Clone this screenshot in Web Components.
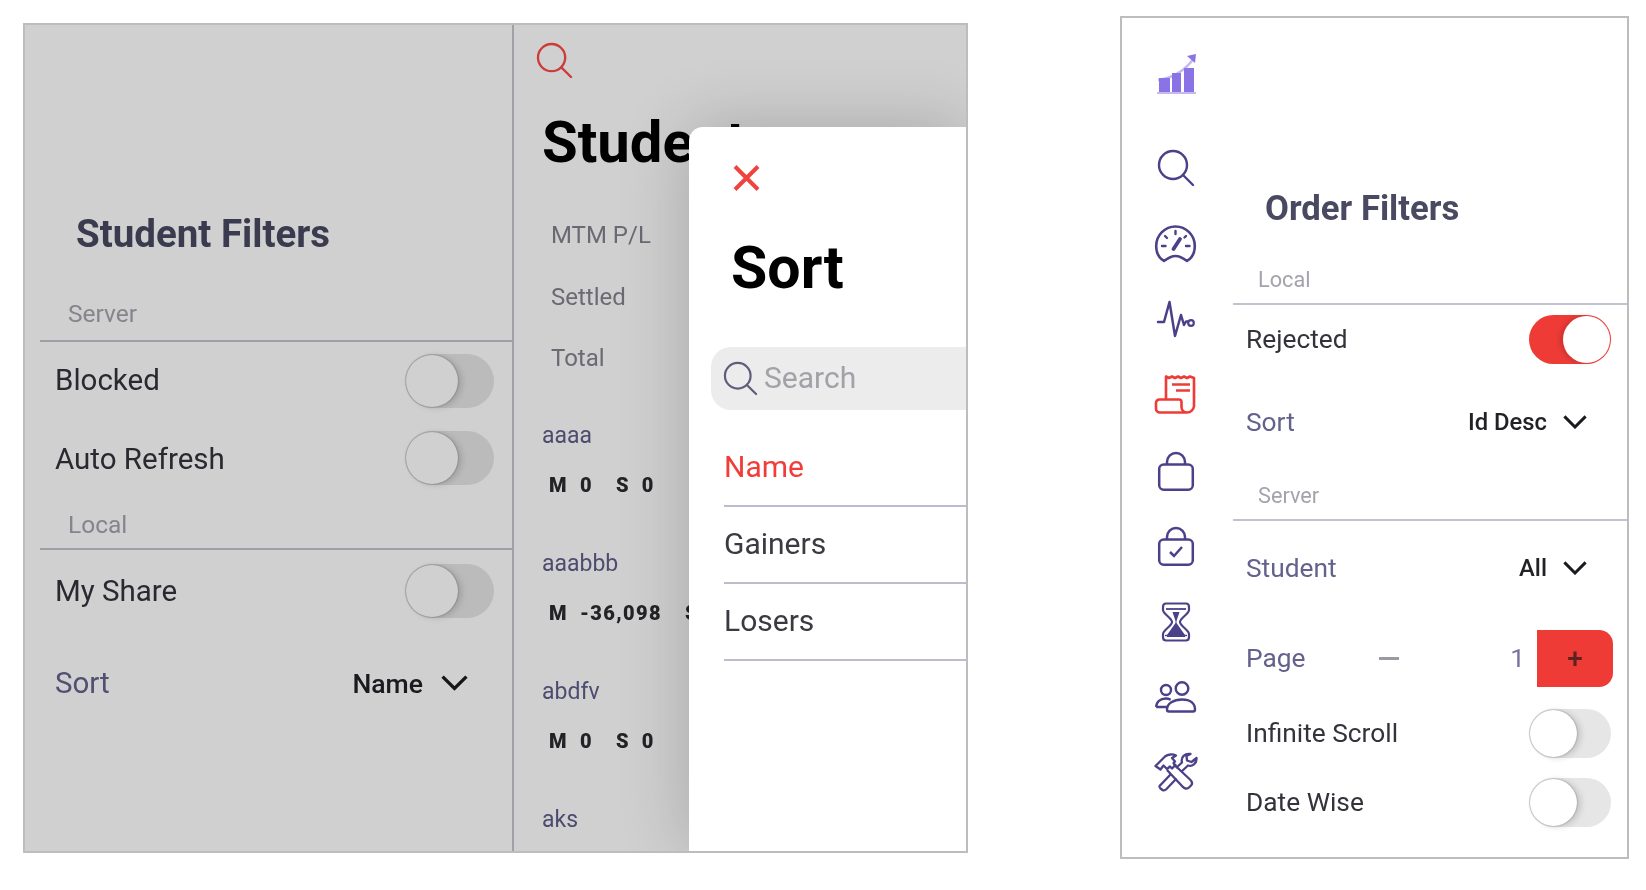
<!DOCTYPE html>
<html>
<head>
<meta charset="utf-8">
<title>Filters</title>
<style>
    html, body { margin: 0; padding: 0; background: #fff; }
    body { font-family: Roboto, "Liberation Sans", sans-serif; width: 1646px; height: 890px; overflow: hidden; }
    .stage { display: flex; align-items: flex-start; padding: 16px 0 0 23px; }
</style>
</head>
<body>
<div class="stage">
    <student-screen></student-screen>
    <order-screen></order-screen>
</div>

<script>
const INDIGO = '#4b4189';
const RED = '#ee3b36';

const ICONS = {
    chart: { w: 40, h: 41, svg: `
        <path d="M2 27C16 25 29 18 38 5" fill="none" stroke="#c5b8f3" stroke-width="2.4"/>
        <path d="M31 3l9-2-1 9z" fill="#8b73e6"/>
        <rect x="3" y="25" width="11" height="14" fill="#8b73e6"/>
        <rect x="16" y="20" width="9" height="19" fill="#8b73e6"/>
        <rect x="28" y="15" width="10" height="24" fill="#8b73e6"/>
        <path d="M1 40H40" stroke="#c5b8f3" stroke-width="2"/>` },
    search: { w: 36, h: 36, svg: `
        <circle cx="15" cy="15" r="14" fill="none" stroke="currentColor" stroke-width="2.4"/>
        <path d="M25 25L35 35" stroke="currentColor" stroke-width="2.4" stroke-linecap="round"/>` },
    gauge: { w: 41, h: 38, svg: `
        <path d="M9 36C4 33 1.200 27 1.200 21 1.200 10 10 1.500 20.500 1.500S39.800 10 39.800 21C39.800 27 37 33 32 36 28 33 25 31 20.500 31S13 33 9 36Z" fill="none" stroke="currentColor" stroke-width="2.600" stroke-linejoin="round"/>
        <path d="M7 21h3.500M10 11l2 2M20.500 6v3M31 11l-1.500 1.500M31 21h3.500" stroke="currentColor" stroke-width="2.400" stroke-linecap="round"/>
        <path d="M18.500 24L25 14" stroke="currentColor" stroke-width="3.800" stroke-linecap="round"/>` },
    pulse: { w: 38, h: 38, svg: `
        <path d="M1 22H7L12.500 2 18 36 24 15 27 25 29 21.500H31" fill="none" stroke="currentColor" stroke-width="2.500" stroke-linejoin="round" stroke-linecap="round"/>
        <circle cx="34" cy="23" r="2.800" fill="none" stroke="currentColor" stroke-width="2.200"/>` },
    receipt: { w: 41, h: 39, svg: `
        <path d="M11 24V1.500l3 1.500 3-1.500 3 1.500 3-1.500 3 1.500 3-1.500 3 1.500 3-1.500 4 1.500V31a7 7 0 0 1-7 6.500H5a4 4 0 0 1-4-4V28a3.500 3.500 0 0 1 3.500-3.500H24c1.500 0 2.500 1 2.500 2.500v5c0 3 2.500 5.500 6 5.500" fill="none" stroke="currentColor" stroke-width="2.600" stroke-linejoin="round"/>
        <path d="M17 9.500H35M21 15.500H35" stroke="currentColor" stroke-width="2.400"/>` },
    bag: { w: 36, h: 39, svg: `
        <rect x="1.200" y="12.500" width="33.600" height="25.300" rx="4.500" fill="none" stroke="currentColor" stroke-width="2.500"/>
        <path d="M9 12.500V10a9 9 0 0 1 18 0v2.500" fill="none" stroke="currentColor" stroke-width="2.500"/>` },
    bagcheck: { w: 36, h: 39, svg: `
        <rect x="1.200" y="12.500" width="33.600" height="25.300" rx="4.500" fill="none" stroke="currentColor" stroke-width="2.500"/>
        <path d="M9 12.500V10a9 9 0 0 1 18 0v2.500" fill="none" stroke="currentColor" stroke-width="2.500"/>
        <path d="M12 25l4 4 8-9" fill="none" stroke="currentColor" stroke-width="2.500"/>` },
    hourglass: { w: 28, h: 40, svg: `
        <path d="M4 1.500H24C26.500 1.500 27 3 27 5V8C27 12 18 16 18 20S27 28 27 32V35C27 37 26.500 38.500 24 38.500H4C1.500 38.500 1 37 1 35V32C1 28 10 24 10 20S1 12 1 8V5C1 3 1.500 1.500 4 1.500Z" fill="none" stroke="currentColor" stroke-width="2.200"/>
        <path d="M4 7H24" stroke="currentColor" stroke-width="1.800"/>
        <path d="M10.500 10H17.500L14.500 19V21L23 33V35H5V33L13.500 21V19Z" fill="currentColor"/>
        <path d="M3 33.500H25" stroke="currentColor" stroke-width="1.400"/>` },
    users: { w: 41, h: 32, svg: `
        <circle cx="11" cy="9" r="5" fill="none" stroke="currentColor" stroke-width="2.400"/>
        <circle cx="27" cy="7.500" r="6.300" fill="none" stroke="currentColor" stroke-width="2.400"/>
        <path d="M1.200 26c0-5 4-8.500 9.500-8.500 2 0 3.500.5 5 1.300M1.200 26H13" fill="none" stroke="currentColor" stroke-width="2.400" stroke-linejoin="round"/>
        <path d="M14 30.500c-1.500 0-2-1-2-2 0-6 6.500-10 15-10s13 4 13 10c0 1-.5 2-2 2Z" fill="none" stroke="currentColor" stroke-width="2.400" stroke-linejoin="round"/>` },
    tools: { w: 44, h: 38, svg: `
        <path d="M1.500 13L11 3.500C14 1 19 1 22 2.500L18 5 21 8.500 19.500 10 21.500 12 18 15.500 16 13.500 13 16 9.500 12.500 6.500 16.500Z" fill="none" stroke="currentColor" stroke-width="2.300" stroke-linejoin="round"/>
        <path d="M13 17L28.500 33.500C30 35.500 33 36.500 35 34.500L37 32.500C39 30.500 38 28.500 36 26.500L19.500 11" fill="none" stroke="currentColor" stroke-width="2.300" stroke-linejoin="round"/>
        <path d="M27 19L34 12.500C38 14 43 10.500 42.500 5L37.500 9 33 7.500 32.500 3 36.500 1C31 0 26.500 4 28 9.500L22 15M17 21L7 31.500C5 33 5 34 6.500 35.500L8.500 37C10 38 11 37.500 12.500 36L22.500 25.500" fill="none" stroke="currentColor" stroke-width="2.300" stroke-linejoin="round"/>` }
};

class AppIcon extends HTMLElement {
    connectedCallback() {
        const icon = ICONS[this.getAttribute('name')];
        const w = Number(this.getAttribute('size')) || icon.w;
        const h = icon.h * w / icon.w;
        this.attachShadow({mode: 'open'}).innerHTML = `
        <style>
            :host { display: block; width: ${w}px; height: ${h}px; line-height: 0; }
            svg { display: block; overflow: visible; }
        </style>
        <svg width="${w}" height="${h}" viewBox="0 0 ${icon.w} ${icon.h}">${icon.svg}</svg>
        `;
    }
}

class FilterToggle extends HTMLElement {
    connectedCallback() {
        const on = this.hasAttribute('on');
        this.attachShadow({mode: 'open'}).innerHTML = `
        <style>
            :host {
                display: flex;
                align-items: center;
                justify-content: space-between;
                height: var(--row);
                padding: 0 var(--pad-right) 0 var(--pad-left);
                box-sizing: border-box;
            }
            .label { font-size: var(--label-size); color: #33333b; white-space: nowrap; margin-top: var(--nudge, 0); }
            .track {
                width: var(--track-w);
                height: var(--track-h);
                border-radius: 30px;
                background: ${on ? RED : '#e6e6e6'};
                position: relative;
            }
            .thumb {
                position: absolute;
                top: 1px;
                ${on ? 'right: 1px' : 'left: 1px'};
                width: calc(var(--track-h) - 2px);
                height: calc(var(--track-h) - 2px);
                border-radius: 50%;
                background: #fff;
                box-shadow: ${on ? '-3px 0 5px rgba(0,0,0,.14)' : '0 0 2px rgba(0,0,0,.4), 4px 1px 6px rgba(0,0,0,.14)'};
            }
        </style>
        <span class="label"><slot></slot></span>
        <span class="track"><span class="thumb"></span></span>
        `;
    }
}

class FilterSelect extends HTMLElement {
    connectedCallback() {
        this.attachShadow({mode: 'open'}).innerHTML = `
        <style>
            :host {
                display: flex;
                align-items: center;
                height: var(--row);
                padding: 0 var(--chev-right) 0 var(--pad-left);
                box-sizing: border-box;
            }
            .label { font-size: var(--label-size); color: #64618c; flex: 1; }
            .value { font-size: var(--value-size); font-weight: 500; color: #222226; }
            svg { display: block; margin-left: var(--chev-gap); }
        </style>
        <span class="label"><slot></slot></span>
        <span class="value">${this.getAttribute('value')}</span>
        <svg width="${this.getAttribute('chev')}" viewBox="0 0 26 15" fill="none" stroke="#1b1b1f" stroke-width="3.200"><path d="M1.500 1.500L13 13 24.500 1.500"/></svg>
        `;
    }
}

class PageStepper extends HTMLElement {
    connectedCallback() {
        this.attachShadow({mode: 'open'}).innerHTML = `
        <style>
            :host {
                display: flex;
                align-items: center;
                height: var(--row);
                padding: 0 14px 0 var(--pad-left);
                box-sizing: border-box;
                color: #64618c;
                font-size: var(--label-size);
            }
            .label { width: 133px; }
            .minus { width: 20px; height: 3px; background: #9a9aa2; }
            .num { flex: 1; text-align: right; padding-right: 12px; color: #77749c; }
            .plus {
                width: 76px;
                height: 57px;
                background: ${RED};
                border-radius: 0 14px 14px 0;
                display: flex;
                align-items: center;
                justify-content: center;
                color: #5e2320;
                font-size: 28px;
                font-weight: 500;
            }
        </style>
        <span class="label"><slot></slot></span>
        <span class="minus"></span>
        <span class="num">1</span>
        <span class="plus">+</span>
        `;
    }
}

class FilterSection extends HTMLElement {
    connectedCallback() {
        this.attachShadow({mode: 'open'}).innerHTML = `
        <style>
            :host {
                display: flex;
                align-items: flex-end;
                height: var(--row);
                padding: 0 0 var(--sec-bottom) var(--sec-left);
                margin-left: var(--line-left);
                border-bottom: 2px solid #c3c3cf;
                box-sizing: border-box;
                font-size: var(--sec-size);
                line-height: 1.2;
                color: #a3a3ad;
            }
        </style>
        <slot></slot>
        `;
    }
}

class FilterPanel extends HTMLElement {
    connectedCallback() {
        this.attachShadow({mode: 'open'}).innerHTML = `
        <style>
            :host { display: block; box-sizing: border-box; }
            h2 {
                margin: 0;
                height: 50px;
                line-height: 50px;
                padding-left: var(--head-left);
                font-size: var(--head-size);
                font-weight: 700;
                color: #494962;
                white-space: nowrap;
            }
        </style>
        <h2>${this.getAttribute('heading')}</h2>
        <slot></slot>
        `;
    }
}

class StudentRow extends HTMLElement {
    connectedCallback() {
        const m = this.getAttribute('m');
        const s = this.getAttribute('s');
        const stats = m === null ? '' : `
            <div class="stats">
                <b>M</b><b class="v">${m}</b><b class="s">S</b><b class="v">${s}</b>
            </div>`;
        this.attachShadow({mode: 'open'}).innerHTML = `
        <style>
            :host { display: block; height: 128px; padding-left: 28px; white-space: nowrap; }
            .name { height: 30px; line-height: 30px; font-size: 23px; color: #5f5d8a; }
            .stats {
                display: flex;
                margin: 19px 0 0 7px;
                height: 30px;
                line-height: 30px;
                font-size: 20px;
                font-weight: 700;
                letter-spacing: 1.4px;
                color: #2b2b30;
            }
            .v { margin-left: 12px; }
            .s { margin-left: 23px; }
        </style>
        <div class="name"><slot></slot></div>
        ${stats}
        `;
    }
}

class StudentList extends HTMLElement {
    connectedCallback() {
        this.attachShadow({mode: 'open'}).innerHTML = `
        <style>
            :host { display: block; flex: 1; height: 826px; overflow: hidden; }
            .search { display: block; color: #fb4a45; margin: 18px 0 0 23px; }
            h1 {
                margin: 29px 0 0 28px;
                height: 70px;
                line-height: 70px;
                font-size: 58px;
                font-weight: 700;
                color: #000;
            }
            .totals { margin: 28px 0 31px 37px; font-size: 24px; color: #83838e; }
            .totals div { height: 61.500px; line-height: 61.500px; }
        </style>
        <app-icon class="search" name="search" size="35"></app-icon>
        <h1>Students</h1>
        <div class="totals">
            <div>MTM P/L</div>
            <div>Settled</div>
            <div>Total</div>
        </div>
        <slot></slot>
        `;
    }
}

class SortSheet extends HTMLElement {
    connectedCallback() {
        this.attachShadow({mode: 'open'}).innerHTML = `
        <style>
            :host {
                position: absolute;
                left: 664px;
                top: 102px;
                right: 0;
                bottom: 0;
                background: #fff;
                border-radius: 14px 0 0 0;
                box-shadow: 0 0 70px rgba(0,0,0,.2);
                overflow: hidden;
                white-space: nowrap;
            }
            svg.close { display: block; margin: 38px 0 0 44px; }
            h1 {
                margin: 42px 0 0 42px;
                height: 70px;
                line-height: 70px;
                font-size: 59px;
                font-weight: 700;
                color: #000;
            }
            .search {
                display: flex;
                align-items: center;
                height: 63px;
                margin: 44px 0 0 22px;
                padding-left: 13px;
                background: #ececec;
                border-radius: 20px 0 0 20px;
                color: #5f5d7c;
                font-size: 30px;
            }
            .search span { color: #a1a1a8; margin: -2px 0 0 7px; }
            .options { margin: 20px 0 0 35px; font-size: 30px; }
            .options div {
                height: 77px;
                line-height: 74px;
                box-sizing: border-box;
                border-bottom: 2px solid #bcbccf;
                color: #3a3a40;
            }
            .options .active { color: #f23c37; }
        </style>
        <svg class="close" width="27" height="26" viewBox="0 0 27 26" stroke="#f0433d" stroke-width="4" fill="none"><path d="M2 1.500L25 24.500M25 1.500L2 24.500"/></svg>
        <h1>Sort</h1>
        <div class="search"><app-icon name="search" size="33"></app-icon><span>Search</span></div>
        <div class="options">
            <div class="active">Name</div>
            <div>Gainers</div>
            <div>Losers</div>
        </div>
        `;
    }
}

class StudentScreen extends HTMLElement {
    connectedCallback() {
        this.attachShadow({mode: 'open'}).innerHTML = `
        <style>
            :host {
                display: flex;
                position: relative;
                margin-top: 7px;
                width: 945px;
                height: 830px;
                box-sizing: border-box;
                border: 2px solid #bdbdbd;
                overflow: hidden;
                background: #fff;
                filter: blur(.6px);
                flex: none;
                --label-size: 29.500px;
                --value-size: 26.600px;
                --sec-size: 24.500px;
                --head-size: 38.500px;
                --head-left: 51px;
                --track-w: 89px;
                --track-h: 54px;
                --pad-left: 30px;
                --pad-right: 18px;
                --chev-right: 44px;
                --chev-gap: 18px;
                --sec-left: 28px;
                --line-left: 15px;
                --sec-bottom: 12px;
            }
            .filters {
                width: 489px;
                flex: none;
                border-right: 2px solid #c6c6cf;
                padding-top: 184px;
                box-sizing: border-box;
            }
            .dim { position: absolute; inset: 0; background: rgba(0,0,0,.185); }
        </style>
        <filter-panel class="filters" heading="Student Filters">
            <filter-section style="--row:83px">Server</filter-section>
            <filter-toggle style="--row:77px;--nudge:-2px">Blocked</filter-toggle>
            <filter-toggle style="--row:77px;--nudge:2px">Auto Refresh</filter-toggle>
            <filter-section style="--row:54px;--sec-bottom:9px">Local</filter-section>
            <filter-toggle style="--row:82px">My Share</filter-toggle>
            <filter-select style="--row:102px" value="Name" chev="27">Sort</filter-select>
        </filter-panel>
        <student-list>
            <student-row m="0" s="0">aaaa</student-row>
            <student-row m="-36,098" s="0">aaabbb</student-row>
            <student-row m="0" s="0">abdfv</student-row>
            <student-row>aks</student-row>
        </student-list>
        <div class="dim"></div>
        <sort-sheet></sort-sheet>
        `;
    }
}

class OrderScreen extends HTMLElement {
    connectedCallback() {
        this.attachShadow({mode: 'open'}).innerHTML = `
        <style>
            :host {
                display: flex;
                margin-left: 152px;
                width: 509px;
                height: 843px;
                box-sizing: border-box;
                border: 2px solid #bdbdbd;
                background: #fff;
                filter: blur(.6px);
                flex: none;
                --label-size: 26.300px;
                --value-size: 23.800px;
                --sec-size: 21.700px;
                --head-size: 34.700px;
                --head-left: 32px;
                --track-w: 82px;
                --track-h: 49px;
                --pad-left: 13px;
                --pad-right: 16px;
                --chev-right: 40px;
                --chev-gap: 16px;
                --sec-left: 25px;
                --line-left: 0px;
                --sec-bottom: 10px;
            }
            .rail {
                width: 111px;
                flex: none;
                display: flex;
                flex-direction: column;
                align-items: center;
                padding: 35px 4px 0 0;
                box-sizing: border-box;
                color: ${INDIGO};
            }
            .rail .r { color: ${RED}; }
            .rail app-icon { flex: none; }
            .order { flex: 1; padding-top: 165px; }
        </style>
        <nav class="rail">
            <app-icon name="chart"></app-icon>
            <app-icon name="search" style="margin-top:56px"></app-icon>
            <app-icon name="gauge" style="margin-top:39px"></app-icon>
            <app-icon name="pulse" style="margin-top:37px"></app-icon>
            <app-icon class="r" name="receipt" style="margin-top:37px"></app-icon>
            <app-icon name="bag" style="margin-top:38px"></app-icon>
            <app-icon name="bagcheck" style="margin-top:36px"></app-icon>
            <app-icon name="hourglass" style="margin-top:36px"></app-icon>
            <app-icon name="users" style="margin-top:39px"></app-icon>
            <app-icon name="tools" style="margin-top:40px"></app-icon>
        </nav>
        <filter-panel class="order" heading="Order Filters">
            <filter-section style="--row:72px">Local</filter-section>
            <filter-toggle style="--row:69px;--nudge:-2px" on>Rejected</filter-toggle>
            <filter-select style="--row:96px" value="Id Desc" chev="24">Sort</filter-select>
            <filter-section style="--row:51px">Server</filter-section>
            <filter-select style="--row:94px" value="All" chev="24">Student</filter-select>
            <page-stepper style="--row:86px">Page</page-stepper>
            <filter-toggle style="--row:65px;--nudge:-2px">Infinite Scroll</filter-toggle>
            <filter-toggle style="--row:72px">Date Wise</filter-toggle>
        </filter-panel>
        `;
    }
}

customElements.define('app-icon', AppIcon);
customElements.define('filter-toggle', FilterToggle);
customElements.define('filter-select', FilterSelect);
customElements.define('page-stepper', PageStepper);
customElements.define('filter-section', FilterSection);
customElements.define('filter-panel', FilterPanel);
customElements.define('student-row', StudentRow);
customElements.define('student-list', StudentList);
customElements.define('sort-sheet', SortSheet);
customElements.define('student-screen', StudentScreen);
customElements.define('order-screen', OrderScreen);
</script>
</body>
</html>
